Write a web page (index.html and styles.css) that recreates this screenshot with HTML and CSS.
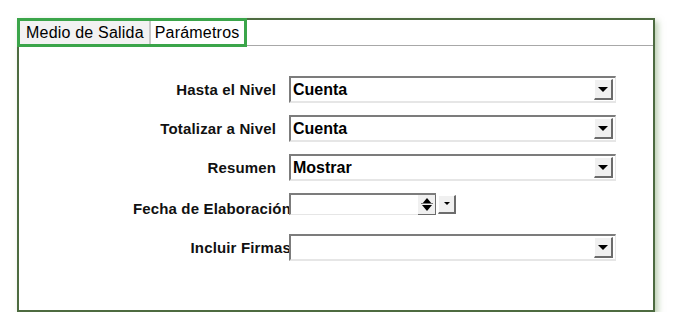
FILE: index.html
```html
<!DOCTYPE html>
<html lang="es">
<head>
    <meta charset="UTF-8">
    <title>Parámetros</title>
    <link rel="stylesheet" href="styles.css">
</head>
<body>
    <div class="frame">
        <div class="tab-strip">
            <div class="tabs">
                <div class="tab">Medio de Salida</div>
                <div class="tab active">Parámetros</div>
            </div>
        </div>

        <div class="form">
            <div class="row">
                <label>Hasta el Nivel</label>
                <div class="select"><span>Cuenta</span><b class="drop"></b></div>
            </div>
            <div class="row">
                <label>Totalizar a Nivel</label>
                <div class="select"><span>Cuenta</span><b class="drop"></b></div>
            </div>
            <div class="row">
                <label>Resumen</label>
                <div class="select"><span>Mostrar</span><b class="drop"></b></div>
            </div>
            <div class="row tight date-row">
                <label>Fecha de Elaboración</label>
                <div class="date">
                    <div class="date-box"><b class="spin"><i class="up"></i><i class="down"></i></b></div>
                    <b class="drop small"></b>
                </div>
            </div>
            <div class="row tight">
                <label>Incluir Firmas</label>
                <div class="select"><span></span><b class="drop"></b></div>
            </div>
        </div>
    </div>
</body>
</html>
```

FILE: styles.css
```css
body {
    margin: 0;
    background: #fff;
    font-family: "Liberation Sans", Arial, sans-serif;
}

.frame {
    margin: 18px 0 0 17px;
    width: 634px;
    height: 290px;
    border: 2px solid #4d6b40;
    box-shadow: 3px 3px 6px rgba(120, 160, 100, 0.5);
}

/* tab strip */
.tab-strip {
    height: 25px;
    border-bottom: 1px solid #a8a8a8;
}

.tabs {
    display: inline-flex;
    margin: -2px 0 0 -2px;
    border: 3px solid #3ba54a;
    height: 23px;
}

.tab {
    font-size: 16px;
    letter-spacing: 0.2px;
    color: #000;
    padding: 3px 5px 0 6px;
    background: #f2f2f2;
    border-right: 2px solid #c8c8c8;
}

.tab.active {
    background: #fff;
    border-right: none;
    padding: 3px 5px 0 4px;
}

/* form */
.form {
    padding-top: 30px;
}

.row {
    display: grid;
    grid-template-columns: 257px 327px;
    column-gap: 13px;
    align-items: center;
    margin-bottom: 12px;
}

.row label {
    text-align: right;
    font-size: 15px;
    font-weight: bold;
    letter-spacing: 0.15px;
    color: #111;
    white-space: nowrap;
}

.row.tight {
    grid-template-columns: 270px 327px;
    column-gap: 0;
}

.row.tight label {
    margin-right: -2px;
}

.date-row {
    margin-bottom: 19px;
}

.date-row label {
    align-self: end;
    line-height: 17px;
    margin-bottom: -2px;
}

.select {
    position: relative;
    height: 23px;
    border-top: 2px solid #7c7c7c;
    border-left: 2px solid #7c7c7c;
    border-bottom: 2px solid #e6e6e6;
    border-right: 1px solid #e6e6e6;
    background: #fff;
    display: flex;
    align-items: center;
    justify-content: space-between;
}

.select span {
    font-size: 16px;
    font-weight: bold;
    padding-left: 2px;
}

.drop {
    width: 16px;
    height: 18px;
    margin-right: 2px;
    background: #f0f0f0;
    border-top: 1px solid #fff;
    border-left: 1px solid #fff;
    border-right: 2px solid #6c6c6c;
    border-bottom: 2px solid #6c6c6c;
    display: flex;
    align-items: center;
    justify-content: center;
}

.drop::after {
    content: "";
    border-left: 5px solid transparent;
    border-right: 5px solid transparent;
    border-top: 5px solid #000;
}

.drop.small {
    width: 15px;
    height: 16px;
    margin-left: 2px;
}

.drop.small::after {
    border-left-width: 3px;
    border-right-width: 3px;
    border-top-width: 3px;
}

.date {
    display: flex;
    align-items: center;
}

.date-box {
    position: relative;
    width: 145px;
    height: 19px;
    border-top: 2px solid #7c7c7c;
    border-left: 2px solid #7c7c7c;
    border-bottom: 1px solid #e6e6e6;
    background: #fff;
    display: flex;
    justify-content: flex-end;
}

.spin {
    width: 17px;
    height: 19px;
    background: #f0f0f0;
    border-right: 1px solid #6c6c6c;
    border-bottom: 1px solid #6c6c6c;
    display: flex;
    flex-direction: column;
    align-items: center;
    justify-content: center;
}

.spin i {
    display: block;
    border-left: 5px solid transparent;
    border-right: 5px solid transparent;
}

.spin .up {
    border-bottom: 6px solid #000;
    margin-bottom: 1px;
}

.spin .down {
    border-top: 6px solid #000;
    position: relative;
}

.spin .down::before {
    content: "";
    position: absolute;
    top: -8px;
    left: -6px;
    width: 12px;
    height: 1px;
    background: #777;
}
```
